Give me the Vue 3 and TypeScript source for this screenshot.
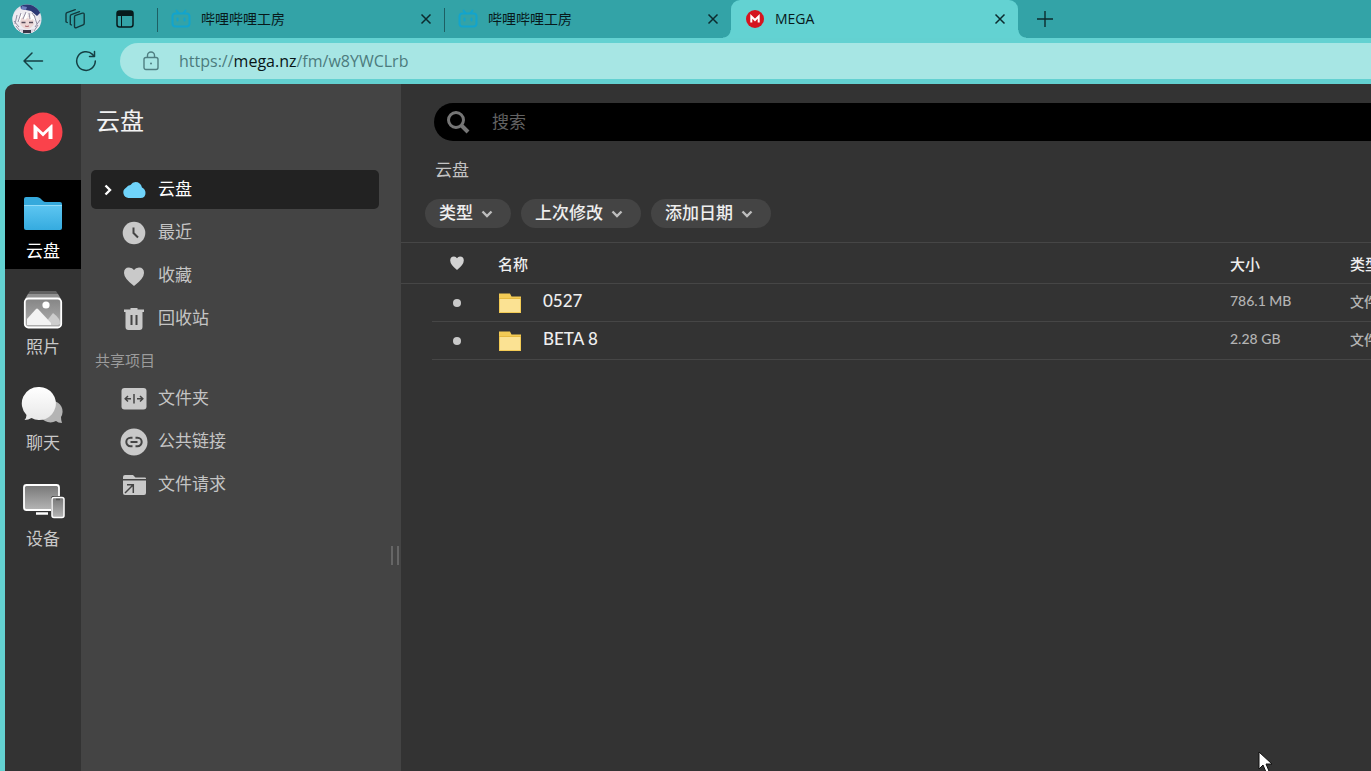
<script setup lang="ts">
import { ref } from 'vue'

interface Tab { title: string; kind: 'bili' | 'mega' }
interface Entry { name: string; size: string; type: string }
interface NavItem { label: string; icon: string }

const tabs: Tab[] = [
  { title: '哔哩哔哩工房', kind: 'bili' },
  { title: '哔哩哔哩工房', kind: 'bili' },
  { title: 'MEGA', kind: 'mega' },
]
const activeTab = ref(2)

const rail: NavItem[] = [
  { label: '云盘', icon: 'folder' },
  { label: '照片', icon: 'photos' },
  { label: '聊天', icon: 'chat' },
  { label: '设备', icon: 'devices' },
]
const activeRail = ref('folder')

const tree: NavItem[] = [
  { label: '云盘', icon: 'cloud' },
  { label: '最近', icon: 'clock' },
  { label: '收藏', icon: 'heart' },
  { label: '回收站', icon: 'trash' },
]
const shared: NavItem[] = [
  { label: '文件夹', icon: 'shared' },
  { label: '公共链接', icon: 'link' },
  { label: '文件请求', icon: 'request' },
]
const activeTree = ref('cloud')

const filters: string[] = ['类型', '上次修改', '添加日期']
const entries: Entry[] = [
  { name: '0527', size: '786.1 MB', type: '文件夹' },
  { name: 'BETA 8', size: '2.28 GB', type: '文件夹' },
]
const query = ref('')
</script>

<template>
  <div class="browser">
    <header class="strip">
      <div class="tools">
        <button class="plain" aria-label="个人资料">
          <svg width="30" height="30" viewBox="0 0 30 30">
            <defs><clipPath id="face"><circle cx="15" cy="15" r="14.5" /></clipPath></defs>
            <g clip-path="url(#face)">
              <rect width="30" height="30" fill="#e3e0ea" />
              <path d="M0 30V13l4-6 6-3 10 2 6 6 4 18z" fill="#eeebf1" />
              <path d="M8 0h16l5 8-4 4-6-5-10-2z" fill="#2c3975" />
              <path d="M10 2l5 1-1 3-5-1z" fill="#6d7fc0" />
              <path d="M9 14q6-4 12 0l1 6q-3 5-7 5t-7-5z" fill="#ecd6d5" />
              <path d="M5 18l5-10 1 7 4-8 1 8 4-6 5 9-4-3-2 1-3-3-3 3-3-3-2 4z" fill="#fff" />
              <path d="M5 11l-2 9M9 9l-3 9M14 8l-3 7M17 9l1 6M22 11l3 9M4 22l4 5M26 21l-4 6M20 9l3 4M2 17l5 6M28 16l-5 7" stroke="#948ea2" fill="none" />
              <path d="M9.500 18.500h4M17 18.500h4" stroke="#544959" stroke-width="1.600" />
              <path d="M13 22q2 1 4 0" stroke="#a85f67" fill="none" />
              <path d="M8 25l7 1 7-1-2 5H10z" fill="#d8d3df" />
              <path d="M11 26h8v3h-8z" fill="#3c3547" />
            </g>
          </svg>
        </button>
        <button class="plain" aria-label="工作区">
          <svg width="22" height="22" viewBox="0 0 22 22" fill="none" stroke="#12383c" stroke-width="1.400" stroke-linejoin="round" stroke-linecap="round">
            <path d="M10.500 9q0-1.200 1.100-1.600l6.800-2.200q1.800-.5 1.800 1.300v8.800q0 1.200-1.100 1.600l-6.600 2.700q-2 .6-2-1.200z" />
            <path d="M7.500 17l-1.200-.7V8.200q0-1.200 1-1.600l8.200-3" />
            <path d="M3.300 14.500L2 13.800V6.300q0-1.200 1-1.600l8.300-3" />
          </svg>
        </button>
        <button class="plain" aria-label="标签页操作">
          <svg width="18" height="18" viewBox="0 0 18 18">
            <rect x="1" y="1" width="16" height="16" rx="2.500" fill="none" stroke="#071a1c" stroke-width="1.500" />
            <path d="M1 6V3.500Q1 1 3.500 1h11Q17 1 17 3.500V6z" fill="#071a1c" />
            <path d="M5.500 6v11" stroke="#071a1c" />
          </svg>
        </button>
      </div>
      <nav class="tabs" aria-label="标签页">
        <div v-for="(tab, i) in tabs" :key="i" class="tab" :class="{ active: i === activeTab }">
          <button class="tab-main" @click="activeTab = i">
            <svg v-if="tab.kind === 'bili'" width="20" height="20" viewBox="0 0 20 20" fill="none" stroke="#12a4cd" stroke-width="2" stroke-linecap="round">
              <rect x="1.500" y="4.500" width="17" height="13" rx="3" />
              <path d="M5.500 1.500l2 2.500M14.500 1.500l-2 2.500M6.500 9.500v2M13.500 9.500v2" />
            </svg>
            <svg v-else width="20" height="20" viewBox="0 0 20 20">
              <circle cx="10" cy="10" r="9" fill="#d5141f" />
              <path d="M6.300 13.500V7.400L10 11l3.700-3.600v6.100" fill="none" stroke="#fff" stroke-width="2" />
            </svg>
            <span>{{ tab.title }}</span>
          </button>
          <button class="plain" aria-label="关闭标签页">
            <svg width="12" height="12" viewBox="0 0 12 12"><path d="M1.500 1.500l9 9M10.500 1.500l-9 9" stroke="#0c2b2e" stroke-width="1.500" /></svg>
          </button>
        </div>
      </nav>
      <button class="plain add" aria-label="新建标签页">
        <svg width="18" height="18" viewBox="0 0 18 18"><path d="M9 1v16M1 9h16" stroke="#0c2b2e" stroke-width="1.400" /></svg>
      </button>
    </header>

    <div class="toolbar">
      <button class="plain" aria-label="返回">
        <svg width="22" height="20" viewBox="0 0 22 20" fill="none" stroke="#153f43" stroke-width="1.500" stroke-linecap="round" stroke-linejoin="round"><path d="M20.500 10H2M10 2L2 10l8 8" /></svg>
      </button>
      <button class="plain" aria-label="刷新">
        <svg width="22" height="22" viewBox="0 0 22 22" fill="none" stroke="#153f43" stroke-width="1.500" stroke-linecap="round" stroke-linejoin="round">
          <path d="M20.300 11A9.300 9.300 0 1 1 17.500 4.400L19.500 6.500M19.500 1.500v5h-5" />
        </svg>
      </button>
      <div class="address">
        <svg width="16" height="20" viewBox="0 0 16 20" fill="none" stroke="#4f7f82" stroke-width="1.400">
          <rect x="1" y="6.500" width="14" height="12" rx="2" />
          <path d="M4.500 6.500V4.500a3.500 3.500 0 0 1 7 0v2" />
          <circle cx="8" cy="12.500" r="1" fill="#4f7f82" stroke="none" />
        </svg>
        <a href="#" class="url">https://<b>mega.nz</b>/fm/w8YWCLrb</a>
      </div>
    </div>

    <div class="app">
      <nav class="rail" aria-label="主导航">
        <a href="#" class="logo" aria-label="MEGA">
          <svg width="40" height="40" viewBox="0 0 40 40">
            <circle cx="20" cy="20" r="19.500" fill="#fa424b" />
            <path d="M10.500 27V13q0-1.200 1-.5L20 20.500l8.500-8q1-.7 1 .5v14h-4v-8L20 24.500 14.500 19v8z" fill="#fff" />
          </svg>
        </a>
        <button v-for="item in rail" :key="item.icon" class="rail-item" :class="{ active: item.icon === activeRail }" @click="activeRail = item.icon">
          <svg v-if="item.icon === 'folder'" width="44" height="40" viewBox="0 0 44 40">
            <defs><linearGradient id="blue" x2="0" y2="1"><stop stop-color="#5cc5f1" /><stop offset="1" stop-color="#35abdf" /></linearGradient></defs>
            <path d="M3 5q0-2 2-2h11q2 0 3.500 1.500l2 2Q23 8 25 8h14q2 0 2 2v6H3z" fill="#35a9dc" />
            <path d="M3 12h38v22q0 2-2 2H5q-2 0-2-2z" fill="url(#blue)" />
            <path d="M3 11.500h38" stroke="#92dcf8" />
          </svg>
          <svg v-else-if="item.icon === 'photos'" width="44" height="40" viewBox="0 0 44 40">
            <defs><linearGradient id="grey" x2="0" y2="1"><stop stop-color="#858585" /><stop offset="1" stop-color="#b0b0b0" /></linearGradient></defs>
            <path d="M9 1h26l2 3H7z" fill="#626262" /><path d="M7 4h30l3 5H4z" fill="#929292" />
            <rect x="3.800" y="8.500" width="36.400" height="29" rx="3.500" fill="url(#grey)" stroke="#fff" stroke-width="1.800" />
            <circle cx="25" cy="15" r="3.600" fill="#fff" />
            <path d="M25 32l7-9q8 6 7 11l-2 1H25z" fill="#cdcdcd" />
            <path d="M6 35v-6l9-10q1-1 2 0l13 14v2z" fill="#f3f3f3" />
          </svg>
          <svg v-else-if="item.icon === 'chat'" width="44" height="40" viewBox="0 0 44 40">
            <defs><linearGradient id="bubble" x2="0" y2="1"><stop stop-color="#fff" /><stop offset="1" stop-color="#e8e8e8" /></linearGradient></defs>
            <path d="M32 15a10.500 10.500 0 0 1 8 16q0 3 1 6-4 0-6-2a11 11 0 0 1-15-4z" fill="#b4b4b4" />
            <path d="M18.500 1a16.500 16.500 0 1 1-8 31q-3 2-7 2 2-2 2-5A16.500 16.500 0 0 1 18.500 1z" fill="url(#bubble)" />
          </svg>
          <svg v-else width="44" height="40" viewBox="0 2 44 40">
            <defs><linearGradient id="screen" x2="0" y2="1"><stop stop-color="#777" /><stop offset="1" stop-color="#b5b5b5" /></linearGradient></defs>
            <rect x="3" y="5" width="35" height="25" rx="2.500" fill="url(#screen)" stroke="#fff" stroke-width="1.800" />
            <path d="M15 33.500h12" stroke="#fff" stroke-width="2.500" />
            <rect x="30" y="16" width="14" height="23" rx="2.500" fill="#333" />
            <rect x="31" y="17.500" width="12" height="20" rx="2" fill="url(#screen)" stroke="#fff" stroke-width="1.500" />
            <path d="M35 19.500h4" stroke="#555" stroke-width="1.500" />
          </svg>
          <span>{{ item.label }}</span>
        </button>
      </nav>

      <aside class="side">
        <h1>云盘</h1>
        <nav class="tree">
          <button v-for="item in tree" :key="item.icon" class="node" :class="{ active: item.icon === activeTree }" @click="activeTree = item.icon">
            <span class="caret">
              <svg v-if="item.icon === 'cloud'" width="8" height="12" viewBox="0 0 8 12" fill="none" stroke="#fff" stroke-width="2.400"><path d="M1.500 1.500L6 6l-4.500 4.500" /></svg>
            </span>
            <svg v-if="item.icon === 'cloud'" width="28" height="28" viewBox="0 0 28 28"><path d="M8.500 22A5.500 5.500 0 0 1 6 11.800Q8 9 10.500 9q2-3 5-3 5 0 6.500 5.500Q25.500 13 25.500 17q0 5-5 5z" fill="#6fd4fb" /></svg>
            <svg v-else-if="item.icon === 'clock'" width="28" height="28" viewBox="0 0 28 28"><circle cx="14" cy="14" r="11.300" fill="#c9c9c9" /><path d="M13.500 8.500v5.500l4.500 4.500" fill="none" stroke="#444" stroke-width="2" /></svg>
            <svg v-else-if="item.icon === 'heart'" width="28" height="28" viewBox="0 0 28 28"><path d="M14 24Q4 16.500 4 11q0-5.500 5-5.500 3.500 0 5 2.500 1.500-2.500 5-2.500 5 0 5 5.500 0 5.500-10 13z" fill="#c9c9c9" /></svg>
            <svg v-else width="28" height="28" viewBox="0 0 28 28"><path d="M10.500 3h7v1.500H24v2.500h-1.500V22q0 3-3 3h-11q-3 0-3-3V7H4V4.500h6.500z" fill="#c9c9c9" /><path d="M11.500 10v10M16.500 10v10" stroke="#444" stroke-width="2" /></svg>
            <span class="text">{{ item.label }}</span>
          </button>
          <h2>共享项目</h2>
          <button v-for="item in shared" :key="item.icon" class="node" :class="{ active: item.icon === activeTree }" @click="activeTree = item.icon">
            <span class="caret"></span>
            <svg v-if="item.icon === 'shared'" width="28" height="28" viewBox="0 0 28 28"><rect x="1.500" y="3" width="25" height="21.500" rx="3" fill="#c9c9c9" /><path d="M14 9v9.500M11 13.700H6M17 13.700h5M8 11l-2.800 2.700L8 16.500M20 11l2.800 2.700L20 16.500" fill="none" stroke="#444" stroke-width="1.500" /></svg>
            <svg v-else-if="item.icon === 'link'" width="28" height="28" viewBox="0 0 28 28"><circle cx="14" cy="14" r="13.500" fill="#c9c9c9" /><path d="M12.500 9.800h-2a4.200 4.200 0 0 0 0 8.400h2M15.500 9.800h2a4.200 4.200 0 0 1 0 8.400h-2M10.500 14h7" fill="none" stroke="#444" stroke-width="2" /></svg>
            <svg v-else width="28" height="28" viewBox="0 0 28 28"><path d="M3 6q0-2 2-2h8l2.500 2.500H25q1 0 1 1V8H3z" fill="#c9c9c9" /><path d="M3 9.500h23V22q0 2-2 2H5q-2 0-2-2z" fill="#c9c9c9" /><path d="M5 22l8-8M7 13.700h6.300V22" fill="none" stroke="#444" stroke-width="1.500" /></svg>
            <span class="text">{{ item.label }}</span>
          </button>
        </nav>
        <div class="grip"></div>
      </aside>

      <main class="main">
        <label class="search">
          <svg width="24" height="24" viewBox="0 0 24 24" fill="none" stroke="#757575" stroke-width="3"><circle cx="10" cy="10" r="7.500" /><path d="M15 15l7 7" stroke-width="4" /></svg>
          <input v-model="query" type="search" placeholder="搜索" aria-label="搜索" />
        </label>
        <a href="#" class="crumb">云盘</a>
        <div class="filters">
          <button v-for="name in filters" :key="name">
            <span class="text">{{ name }}</span>
            <svg width="12" height="8" viewBox="0 0 12 8" fill="none" stroke="#bdbdbd" stroke-width="2.400"><path d="M1.500 1.500L6 6l4.500-4.500" /></svg>
          </button>
        </div>
        <table>
          <thead>
            <tr>
              <th class="mark"><svg role="img" aria-label="收藏" width="16" height="16" viewBox="0 0 16 16"><path d="M8 15Q1.200 9.500 1.200 5.500 1.200 1.500 5 1.500q2 0 3 1.700 1-1.700 3-1.700 3.800 0 3.800 4T8 15z" fill="#d2d2d2" /></svg></th>
              <th>名称</th>
              <th class="size">大小</th>
              <th class="type">类型</th>
            </tr>
          </thead>
          <tbody>
            <tr v-for="entry in entries" :key="entry.name">
              <td class="mark"><i></i></td>
              <td>
                <div class="file">
                  <svg width="24" height="22" viewBox="0 0 24 22"><path d="M1 1.500h11l1.500 3H23V21H1z" fill="#f3cb55" /><path d="M2 7h20v13H2z" fill="#fbe293" /><path d="M1 6.500h22" stroke="#e6b93f" /></svg>
                  <span class="text">{{ entry.name }}</span>
                </div>
              </td>
              <td class="meta"><div class="text">{{ entry.size }}</div></td>
              <td class="meta"><div class="text">{{ entry.type }}</div></td>
            </tr>
          </tbody>
        </table>
      </main>
    </div>

    <svg class="pointer" width="16" height="22" viewBox="0 0 16 22"><path d="M2 1v17l4-4 3 7 3-1-3-7h6z" fill="#fff" stroke="#111" /></svg>
  </div>
</template>

<style>
body { margin: 0; }
</style>

<style scoped>
.browser {
  height: 100vh;
  display: flex;
  flex-direction: column;
  overflow: hidden;
  position: relative;
  background: #63d1d1;
  font-family: Lato, "Noto Sans CJK SC", sans-serif;
}
button {
  border: 0;
  padding: 0;
  background: none;
  font: inherit;
  color: inherit;
}
a { color: inherit; text-decoration: none; }
svg { display: block; flex: none; }
.plain { display: flex; align-items: center; justify-content: center; }
.text { padding-bottom: 4px; }

.strip { display: flex; height: 38px; flex: none; background: #33a3a7; }
.tools { width: 145px; padding-left: 12px; flex: none; display: flex; align-items: center; gap: 22px; }
.tools .plain:last-child { margin-left: 8px; }
.tabs { display: flex; min-width: 0; }
.tab {
  width: 287px;
  box-sizing: border-box;
  padding: 0 12px 0 13px;
  border-left: 1px solid transparent;
  display: flex;
  align-items: center;
  position: relative;
  font: 14px "Open Sans", "Noto Sans CJK SC", sans-serif;
  color: #08191b;
}
.tab:not(.active)::before {
  content: "";
  position: absolute;
  left: -1px;
  top: 8px;
  height: 24px;
  border-left: 1px solid #1d5f63;
}
.tab-main { flex: 1; display: flex; align-items: center; gap: 10px; text-align: left; }
.tab-main span { padding-bottom: 2px; }
.tab.active { background: #63d2d2; border-radius: 9px 9px 0 0; }
.tab.active::before,
.tab.active::after {
  content: "";
  position: absolute;
  bottom: 0;
  width: 8px;
  height: 8px;
}
.tab.active::before { left: -9px; background: radial-gradient(circle at 0 0, transparent 7px, #63d2d2 8px); }
.tab.active::after { right: -8px; background: radial-gradient(circle at 100% 0, transparent 7px, #63d2d2 8px); }
.add { margin-left: 18px; }

.toolbar { height: 46px; flex: none; display: flex; align-items: center; padding-left: 22px; gap: 31px; }
.address {
  flex: 1;
  height: 36px;
  margin-left: -8px;
  padding-left: 23px;
  display: flex;
  align-items: center;
  gap: 20px;
  background: #a7e6e4;
  border-radius: 18px 0 0 18px;
}
.url { font: 16px "Open Sans", sans-serif; color: #4c7b7d; }
.url b { font-weight: 400; color: #071517; }

.app {
  flex: 1;
  min-height: 0;
  margin-left: 5px;
  display: flex;
  border-radius: 9px 0 0 0;
  overflow: hidden;
  background: #333;
}
.rail { width: 76px; flex: none; display: flex; flex-direction: column; gap: 7px; color: #c8c8c8; }
.logo { height: 40px; padding: 28px 0 21px; display: flex; justify-content: center; }
.rail-item {
  height: 89px;
  box-sizing: border-box;
  display: flex;
  flex-direction: column;
  align-items: center;
  gap: 5px;
  padding-top: 14px;
  font-size: 17px;
  line-height: 24px;
}
.rail-item.active { background: #000; color: #fff; }

.side { width: 320px; flex: none; box-sizing: border-box; padding: 0 22px 0 10px; background: #444; position: relative; color: #c4c4c4; }
h1 { margin: 0; padding: 20px 5px 32px; font-size: 24px; line-height: 34px; font-weight: 400; color: #f2f2f2; }
.tree { display: flex; flex-direction: column; gap: 4px; }
.node {
  height: 39px;
  padding-left: 13px;
  display: flex;
  align-items: center;
  border-radius: 5px;
  font-size: 17px;
}
.node > svg { margin: 0 10px 0 8px; }
.node.active { background: #222; color: #fff; }
.caret { width: 8px; }
h2 { margin: 0; padding: 3px 0 0 4px; font-size: 15px; line-height: 30px; font-weight: 400; color: #9c9c9c; }
.grip {
  position: absolute;
  right: 2px;
  top: 462px;
  width: 4px;
  height: 19px;
  border: solid #666;
  border-width: 0 2px;
}

.main { flex: 1; min-width: 0; overflow: hidden; padding-top: 19px; }
.search {
  height: 38px;
  margin-left: 33px;
  padding-left: 12px;
  display: flex;
  align-items: center;
  gap: 22px;
  background: #000;
  border-radius: 19px 0 0 19px;
}
.search input { flex: 1; border: 0; padding: 0 0 2px; outline: 0; background: none; font: inherit; font-size: 17px; color: #ddd; }
.search input::placeholder { color: #626262; opacity: 1; }
.crumb { display: block; margin: 16px 0 0 34px; font-size: 17px; line-height: 26px; color: #c4c4c4; }
.filters { display: flex; gap: 10px; padding: 16px 0 14px 24px; }
.filters button {
  height: 29px;
  padding: 0 18px 0 14px;
  display: flex;
  align-items: center;
  gap: 8px;
  border-radius: 15px;
  background: #444;
  color: #eee;
  font-size: 17px;
  font-weight: 500;
}
table { width: calc(100% + 100px); table-layout: fixed; border-spacing: 0; border-top: 1px solid #464646; }
th, td { height: 37px; padding: 0; text-align: left; border-bottom: 1px solid #464646; }
th { height: 40px; font-size: 15px; font-weight: 500; color: #eee; }
.mark { width: 97px; }
td.mark { border-bottom: 0; background: linear-gradient(#464646, #464646) 31px 100% / 100% 1px no-repeat; }
.mark svg { margin-left: 48px; }
.mark i { display: block; width: 8px; height: 8px; margin-left: 52px; border-radius: 50%; background: #c9c9c9; }
.size { width: 120px; }
.type { width: 121px; }
.file { display: flex; align-items: center; gap: 21px; font-size: 17px; line-height: 24px; font-weight: 500; color: #eee; }
.meta { font-size: 14px; font-weight: 500; color: #b4b4b4; }
.pointer { position: absolute; right: 98px; bottom: -2px; }
</style>
